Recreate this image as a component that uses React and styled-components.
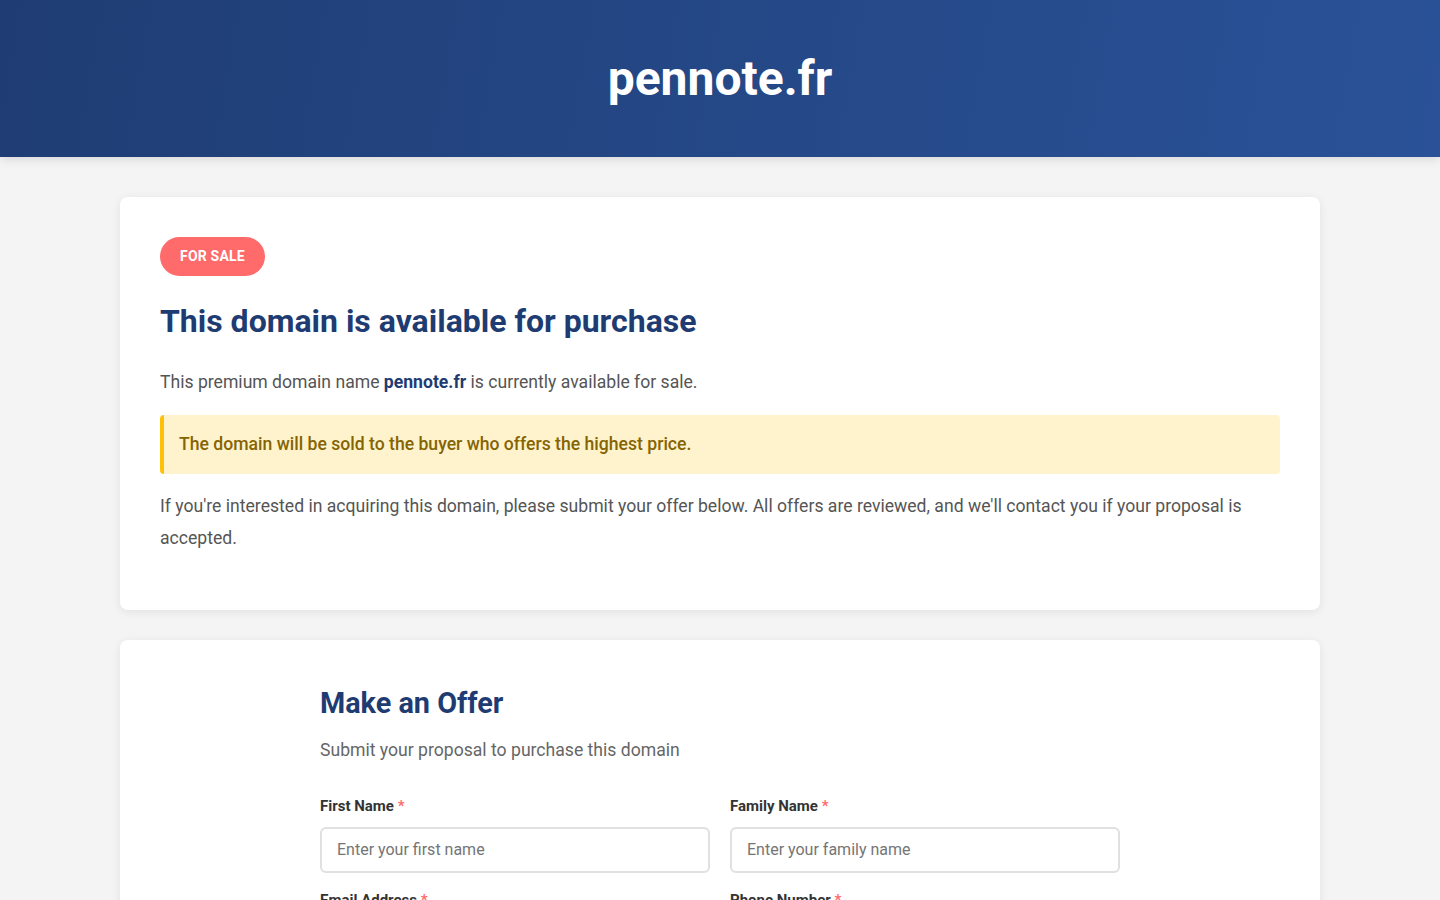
import React from 'react';
import styled, { createGlobalStyle } from 'styled-components';

const GlobalStyle = createGlobalStyle`
    * { box-sizing: border-box; }
    body {
        margin: 0;
        background: #f4f4f4;
        font-family: Roboto, "Liberation Sans", Arial, sans-serif;
        color: #333;
    }
`

const Header = styled.header`
    height: 157px;
    display: flex;
    align-items: center;
    justify-content: center;
    background: linear-gradient(100deg, #1f3d74 0%, #2a5298 100%);
    box-shadow: 0 2px 10px rgba(0, 0, 0, 0.12);

    h1 {
        margin: 0;
        color: #fff;
        font-size: 48px;
        font-weight: 700;
    }
`

const Main = styled.main`
    max-width: 1200px;
    margin: 40px auto 0;
    display: flex;
    flex-direction: column;
    gap: 30px;
`

const Card = styled.section`
    background: #fff;
    border-radius: 8px;
    box-shadow: 0 2px 10px rgba(0, 0, 0, 0.08);
    padding: 40px 40px 39px;
`

const Badge = styled.span`
    display: inline-block;
    background: #ff6b6b;
    color: #fff;
    font-size: 14px;
    font-weight: 700;
    text-transform: uppercase;
    letter-spacing: 0.2px;
    padding: 10px 20px;
    line-height: 19px;
    border-radius: 20px;
`

const Title = styled.h2`
    margin: ${props => props.$top || 0}px 0 0;
    color: #1e3c72;
    font-size: ${props => props.$small ? '28.8px' : '32px'};
    font-weight: 700;
    line-height: ${props => props.$small ? '35px' : '38px'};
`

const Text = styled.p`
    margin: ${props => props.$top || 0}px 0 16px;
    font-size: 17.6px;
    line-height: 31.7px;
    color: ${props => props.$muted ? '#666' : '#555'};

    strong {
        color: #1e3c72;
        font-weight: 700;
    }
`

const Notice = styled.div`
    margin-top: 13px;
    background: #fff3cd;
    border-left: 4px solid #ffc107;
    border-radius: 4px;
    padding: 14px 15px;
    color: #856404;
    font-size: 17.6px;
    font-weight: 500;
    line-height: 31.7px;
`

const FormWrap = styled.div`
    max-width: 800px;
    margin: 0 auto;
`

const Row = styled.div`
    display: grid;
    grid-template-columns: 1fr 1fr;
    gap: 20px;
    margin-top: ${props => props.$top || 18}px;
`

const Field = styled.div`
    display: flex;
    flex-direction: column;
    gap: 12px;
`

const Label = styled.label`
    font-size: 15px;
    font-weight: 700;
    line-height: 18px;
    color: #333;

    span {
        color: #ff6b6b;
    }
`

const Input = styled.input`
    height: 46px;
    border: 2px solid #e0e0e0;
    border-radius: 6px;
    padding: 0 15px;
    font-family: inherit;
    font-size: 16px;
    color: #333;
    outline: none;

    &::placeholder {
        color: #757575;
    }
`

const FormField = ({ label, placeholder, type = 'text' }) => (
    <Field>
        <Label>{label} <span>*</span></Label>
        <Input type={type} placeholder={placeholder} />
    </Field>
)

const App = () => (
    <>
        <GlobalStyle />
        <Header>
            <h1>pennote.fr</h1>
        </Header>
        <Main>
            <Card>
                <Badge>For Sale</Badge>
                <Title $top={26}>This domain is available for purchase</Title>
                <Text $top={27}>
                    This premium domain name <strong>pennote.fr</strong> is currently available for sale.
                </Text>
                <Notice>The domain will be sold to the buyer who offers the highest price.</Notice>
                <Text $top={17}>
                    If you're interested in acquiring this domain, please submit your offer below. All offers are reviewed, and we'll contact you if your proposal is accepted.
                </Text>
            </Card>
            <Card>
                <FormWrap>
                    <Title $small $top={6}>Make an Offer</Title>
                    <Text $top={14} $muted>Submit your proposal to purchase this domain</Text>
                    <Row $top={30}>
                        <FormField label="First Name" placeholder="Enter your first name" />
                        <FormField label="Family Name" placeholder="Enter your family name" />
                    </Row>
                    <Row>
                        <FormField label="Email Address" placeholder="Enter your email address" type="email" />
                        <FormField label="Phone Number" placeholder="Enter your phone number" type="tel" />
                    </Row>
                </FormWrap>
            </Card>
        </Main>
    </>
)

export default App;
